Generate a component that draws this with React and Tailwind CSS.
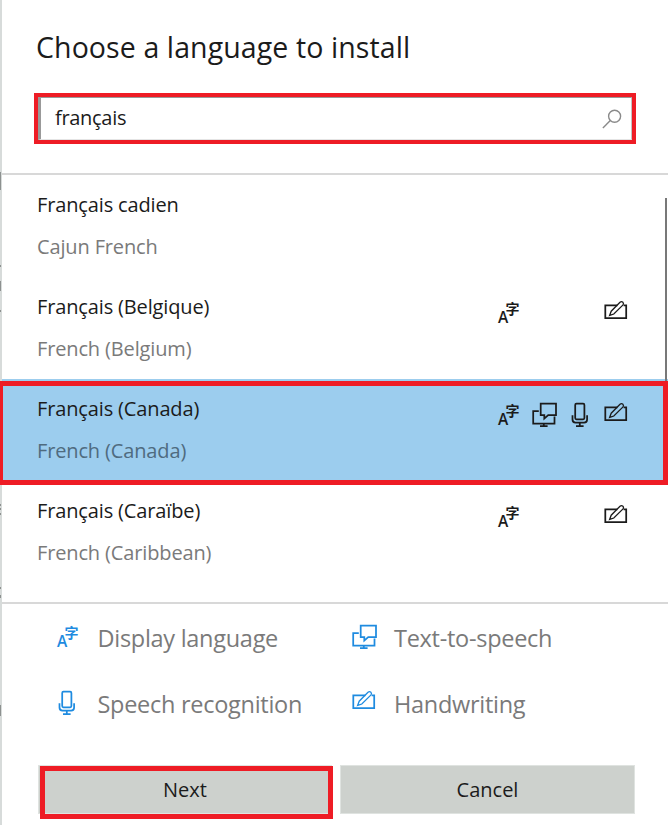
const GLYPHS = {
  display: (
    <g fill="currentColor" stroke="none">
      <text x="2" y="23.7" className="font-['Open_Sans','Noto_Sans',sans-serif] text-[15.5px] font-semibold">A</text>
      <text x="9.5" y="15" className="font-['Noto_Sans_CJK_SC',sans-serif] text-[14px] font-bold">字</text>
    </g>
  ),
  speech: (
    <g>
      <path d="M6.8 10H1.2V22.5H22.5V15.5" />
      <path d="M8.7 2.7H24V14.2H16.2L12.3 17.6V14.2H8.7Z" />
      <path d="M11.8 22.5V25M8 25.2H15.6" />
    </g>
  ),
  mic: (
    <g>
      <rect x="7.2" y="2.7" width="9.2" height="15.6" rx="1.2" />
      <path d="M4.5 14.3V18.6Q4.5 21.6 7.5 21.6H16.1Q19.1 21.6 19.1 18.6V14.3" />
      <path d="M11.8 21.6V25M8 25.2H15.6" />
    </g>
  ),
  pen: (
    <g>
      <path d="M13.4 6.3H1.3V19.1H22.2V6.3H19.6" />
      <path strokeWidth="1.3" d="M5.6 16.4L7.2 12.2L16 3.2Q17.5 2 18.9 3.2Q20.1 4.7 18.8 6.1L9.8 15Z" />
    </g>
  ),
};

function Icon({ name }) {
  return (
    <svg viewBox="0 0 28 28" width="28" height="28" fill="none" stroke="currentColor" strokeWidth="1.75" className="block shrink-0 overflow-visible">
      {GLYPHS[name]}
    </svg>
  );
}

const LANGUAGES = [
  { native: "Français cadien", english: "Cajun French", icons: [] },
  { native: "Français (Belgique)", english: "French (Belgium)", icons: ["display", null, null, "pen"] },
  { native: "Français (Canada)", english: "French (Canada)", icons: ["display", "speech", "mic", "pen"], selected: true },
  { native: "Français (Caraïbe)", english: "French (Caribbean)", icons: ["display", null, null, "pen"] },
];

function Row({ native, english, icons, selected }) {
  return (
    <div className={`relative flex h-[102px] justify-between pl-[35px] pr-[28px] ${selected ? "bg-[#9ccdee]" : ""}`}>
      <div className="pt-[12px] text-[20px] leading-[36px] tracking-[-0.14px]">
        <div className="text-[#1b1b1b]">{native}</div>
        <div className={`mt-[6px] ${selected ? "text-[#4f6b7f]" : "text-[#7a7a7a]"}`}>{english}</div>
      </div>
      <div className="flex pt-[22px] text-[#1b1b1b]">
        {icons.map((name, i) => (
          <div key={i} className="w-[36px]">{name && <Icon name={name} />}</div>
        ))}
      </div>
      {selected && <div className="absolute -left-[2px] right-0 top-[2px] z-10 h-[104px] border-y-[5px] border-l-[3px] border-r-[5px] border-[#ee1c25]" />}
    </div>
  );
}

function Legend({ icon, label, wide }) {
  return (
    <div className="flex h-[66px] items-start">
      <div className="pt-[5px] text-[#1e8be0]"><Icon name={icon} /></div>
      <div className={`text-[23.5px] leading-[40px] tracking-[-0.28px] text-[#7a7a7a] ${wide ? "ml-[14px]" : "ml-[14.5px]"}`}>{label}</div>
    </div>
  );
}

const MARKS = [
  "top-[172px] h-[18px]",
  "top-[265px] h-[2px]",
  "top-[281px] h-[10px]",
  "top-[310px] h-[2px]",
  "top-[504px] h-[2px]",
  "top-[508px] h-[2px]",
  "top-[513px] h-[2px]",
  "top-[587px] h-[2px]",
  "top-[595px] h-[3px]",
  "top-[705px] h-[11px]",
];

export default function App() {
  return (
    <div className="relative flex h-[825px] w-[668px] flex-col overflow-hidden bg-white pl-[2px] font-['Open_Sans','Noto_Sans',sans-serif]">
      <div className="absolute left-0 top-0 h-full w-[2px] bg-[#d7dbda]" />
      {MARKS.map((m) => (
        <div key={m} className={`absolute left-0 w-px bg-[#8d9190] ${m}`} />
      ))}
      <header className="h-[175px] shrink-0 border-b-2 border-[#d8d8d8] pl-[32px] pt-[27px]">
        <h1 className="ml-[2px] h-[40px] whitespace-nowrap text-[28.5px] leading-[40px] tracking-[0.1px] text-[#1b1b1b]">Choose a language to install</h1>
        <div className="mt-[26px] h-[51px] w-[602px] border-4 border-[#ee1c25]">
          <div className="flex h-full items-center justify-between border-l-[3px] border-r border-t border-b border-l-[#999] border-r-[#c4c4c4] border-t-[#999] border-b-[#e4e4e4] pl-[14px] pr-[9px]">
            <span className="-mt-[2px] text-[20px] leading-[36px] tracking-[-0.3px] text-[#1b1b1b]">français</span>
            <svg viewBox="0 0 20 20" width="20" height="20" fill="none" stroke="#8a8a8a" strokeWidth="1.4">
              <circle cx="12.6" cy="7.2" r="6" />
              <path d="M8.3 11.5L0.9 19" />
            </svg>
          </div>
        </div>
      </header>
      <main className="relative h-[427px] shrink-0">
        {LANGUAGES.map((l) => <Row key={l.native} {...l} />)}
        <div className="absolute right-px top-[23px] h-[183px] w-[2px] bg-[#787878]" />
      </main>
      <footer className="flex-1 border-t-2 border-[#d8d8d8]">
        <div className="grid h-[160px] grid-cols-[297px_1fr] content-start pl-[53px] pt-[14px]">
          <Legend icon="display" label="Display language" />
          <Legend icon="speech" label="Text-to-speech" wide />
          <Legend icon="mic" label="Speech recognition" />
          <Legend icon="pen" label="Handwriting" wide />
        </div>
        <div className="flex gap-[8px] pl-[36px] pt-px text-[20px] leading-[46px] text-[#1b1b1b]">
          <button className="relative h-[49px] w-[294px] border border-[#dfe3e0] bg-[#cdd1cd]">
            Next
            <span className="absolute left-px top-0 h-[53px] w-[293px] border-[5px] border-[#ee1c25]" />
          </button>
          <button className="h-[49px] w-[295px] border border-[#dfe3e0] bg-[#cdd1cd]">Cancel</button>
        </div>
      </footer>
    </div>
  );
}
